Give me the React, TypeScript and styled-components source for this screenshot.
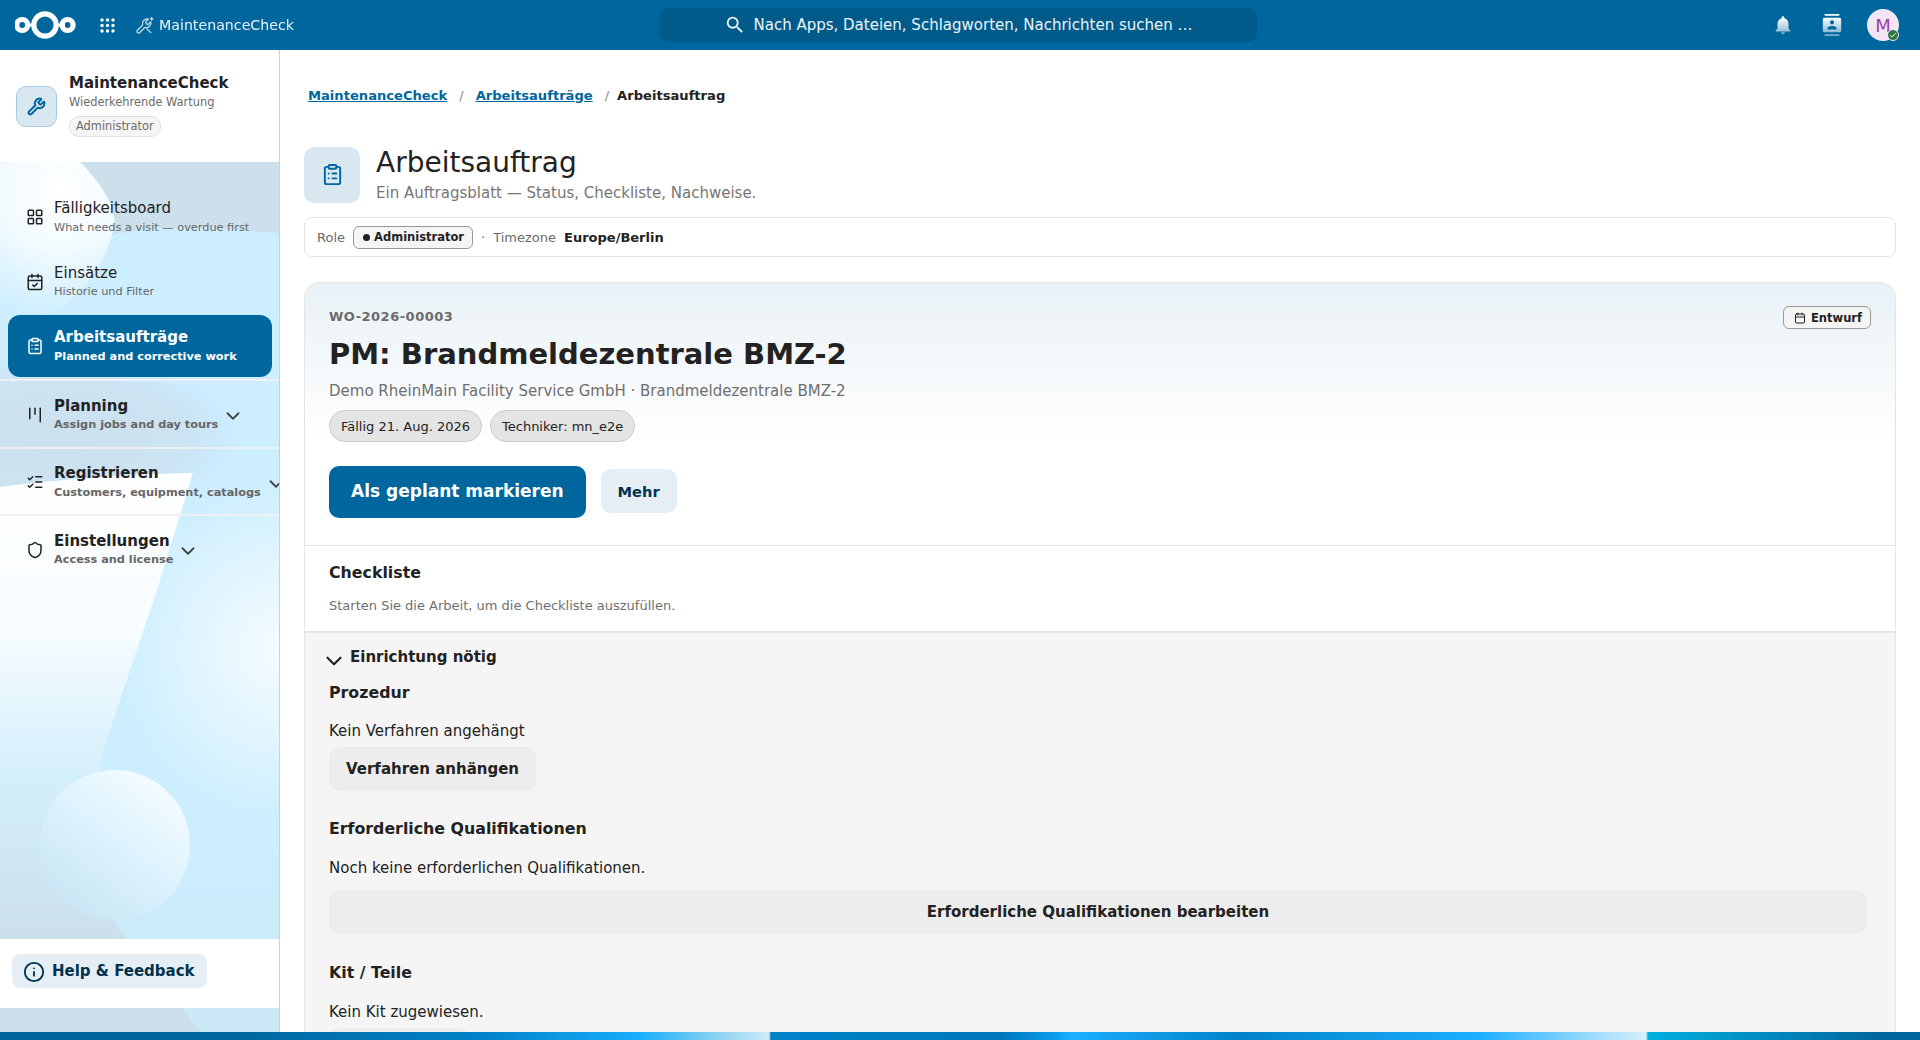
import React from "react"
import styled, { createGlobalStyle } from "styled-components"
import {
    Calendar,
    CalendarCheck,
    ChevronDown,
    ClipboardList,
    Info,
    Kanban,
    LayoutGrid,
    ListChecks,
    Shield,
    Wrench,
} from "lucide-react"
import { MdContacts, MdNotifications, MdSearch } from "react-icons/md"

const GlobalStyle = createGlobalStyle`
    html, body, #root {
        margin: 0;
        height: 100%;
    }

    body {
        font-family: "DejaVu Sans", "Liberation Sans", sans-serif;
        color: #222;
        overflow: hidden;
    }
`

const Page = styled.div`
    position: relative;
    display: grid;
    grid-template-rows: 50px 1fr 8px;
    height: 100vh;
    overflow: hidden;
`

const Wallpaper = styled.svg`
    position: absolute;
    left: 0;
    top: 0;
    width: 280px;
    height: 1040px;
`

const Header = styled.header`
    position: relative;
    display: grid;
    grid-template-columns: 660px 597px 1fr;
    align-items: center;
    background: #00679e;
    color: #fff;
`

const HeaderLeft = styled.div`
    display: flex;
    align-items: center;
    padding-left: 15px;
`

const AppGrid = styled.svg`
    width: 15px;
    height: 15px;
    margin-left: 23px;
    fill: #fff;
`

const AppIcon = styled.svg`
    width: 19px;
    height: 19px;
    margin-left: 20px;
    fill: none;
    stroke: #fff;
    stroke-width: 1.7;
    stroke-linecap: round;
    stroke-linejoin: round;
    opacity: 0.75;
`

const AppName = styled.span`
    margin-left: 5px;
    font-size: 14.2px;
    opacity: 0.92;
`

const SearchBox = styled.div`
    display: flex;
    align-items: center;
    justify-content: center;
    gap: 7px;
    height: 34px;
    border-radius: 8px;
    background: #005a8a;
    font-size: 15px;
    color: #edf5f9;

    svg {
        font-size: 22px;
    }
`

const HeaderRight = styled.div`
    display: flex;
    align-items: center;
    justify-content: flex-end;
    padding-right: 21px;
`

const FadedIcon = styled.span`
    display: flex;
    margin-right: 27px;
    font-size: 22px;
    color: #fff;
    mask-image: linear-gradient(#fff 15%, rgba(255, 255, 255, 0.45) 100%);

    &:nth-child(2) {
        margin-right: 24px;
    }
`

const Avatar = styled.div`
    position: relative;
    display: flex;
    align-items: center;
    justify-content: center;
    width: 32px;
    height: 32px;
    border-radius: 50%;
    background: #f3e6f4;
    color: #9c3faa;
    font-size: 18px;
`

const StatusDot = styled.span`
    position: absolute;
    right: 0;
    bottom: 0;
    display: flex;
    align-items: center;
    justify-content: center;
    box-sizing: border-box;
    width: 12px;
    height: 12px;
    border-radius: 50%;
    background: #2d7b41;
    border: 1px solid #f3e6f4;

    svg {
        width: 8px;
        height: 8px;
        fill: none;
        stroke: #fff;
        stroke-width: 3;
    }
`

const Body = styled.div`
    position: relative;
    display: flex;
    min-height: 0;
`

const Sidebar = styled.aside`
    display: flex;
    flex-direction: column;
    box-sizing: border-box;
    flex: 0 0 280px;
    border-right: 1px solid #b9d5e6;
    background: rgba(255, 255, 255, 0.8);
    overflow: hidden;
`

const Brand = styled.div`
    display: flex;
    align-items: center;
    gap: 12px;
    box-sizing: border-box;
    height: 112px;
    padding: 0 16px;
    background: #fff;
`

const BrandIcon = styled.div`
    display: flex;
    align-items: center;
    justify-content: center;
    box-sizing: border-box;
    width: 41px;
    height: 41px;
    border-radius: 10px;
    background: #d9e8f0;
    border: 1px solid #a6cbe0;
    color: #00679e;

    svg {
        width: 19px;
        height: 19px;
        stroke-width: 2.5;
    }
`

const BrandText = styled.div`
    display: flex;
    flex-direction: column;
    align-items: flex-start;
    margin-top: -2px;
`

const BrandTitle = styled.div`
    font-size: 15px;
    font-weight: 700;
    line-height: 21px;
`

const BrandSub = styled.div`
    font-size: 11.4px;
    line-height: 16px;
    color: #6b6b6b;
`

const RoleTag = styled.div`
    margin-top: 6px;
    padding: 0 6px;
    height: 19px;
    line-height: 19px;
    border-radius: 10px;
    border: 1px solid #e0e0e0;
    background: #f5f5f5;
    font-size: 11.4px;
    color: #6b6b6b;
`

const Nav = styled.nav`
    flex: 1;
    padding-top: 24px;
`

const NavRow = styled.div<{ $active?: boolean; $group?: boolean }>`
    display: flex;
    align-items: center;
    box-sizing: border-box;
    height: ${props => (props.$group ? "66px" : "62px")};
    margin: ${props => (props.$group ? "0" : "0 7px 2.5px 8px")};
    padding-left: ${props => (props.$group ? "26px" : "18px")};
    padding-top: ${props => (props.$group ? "1px" : "0")};
    border-radius: 12px;
    background: ${props => (props.$active ? "#00679e" : "transparent")};
    color: ${props => (props.$active ? "#fff" : "#222")};

    & > svg:first-child {
        flex: none;
        width: 18px;
        height: 18px;
    }
`

const NavDivider = styled.div`
    height: 2px;
    margin-top: -0.5px;
    background: #edf1f4;
`

const NavText = styled.div`
    margin-left: 10px;
    white-space: nowrap;
`

const NavTitle = styled.div<{ $strong?: boolean }>`
    font-size: 15px;
    line-height: 20px;
    font-weight: ${props => (props.$strong ? 700 : 400)};
`

const NavSub = styled.div<{ $strong?: boolean; $light?: boolean }>`
    margin-top: 1.5px;
    font-size: 11.3px;
    line-height: 16px;
    font-weight: ${props => (props.$strong ? 700 : 400)};
    color: ${props => (props.$light ? "#fff" : "#666")};
`

const NavChevron = styled(ChevronDown)`
    flex: none;
    width: 22px;
    height: 22px;
    margin: 3px 0 0 4px;
    color: #444;
`

const SidebarFooter = styled.div`
    display: flex;
    align-items: center;
    box-sizing: border-box;
    height: 69px;
    margin-bottom: 24px;
    padding: 0 0 5px 12px;
    background: #fff;
`

const HelpButton = styled.div`
    display: flex;
    align-items: center;
    gap: 7px;
    box-sizing: border-box;
    width: 195px;
    height: 34px;
    padding-left: 11px;
    border-radius: 8px;
    background: #e6eef5;
    color: #00324d;
    font-size: 15px;
    font-weight: 700;

    svg {
        width: 22px;
        height: 22px;
        margin-top: 2px;
    }
`

const Main = styled.main`
    flex: 1;
    min-width: 0;
    box-sizing: border-box;
    padding: 0 24px;
    background: #fff;
    overflow: hidden;
`

const Breadcrumbs = styled.div`
    display: flex;
    align-items: center;
    height: 20px;
    margin-top: 35px;
    padding-left: 4px;
    font-size: 13.1px;
    font-weight: 700;
`

const CrumbLink = styled.a`
    color: #00679e;
    text-decoration: underline;
`

const CrumbSep = styled.span<{ $tight?: boolean }>`
    margin: 0 ${props => (props.$tight ? "8px" : "12px")} 0 12px;
    font-weight: 400;
    color: #888;
`

const PageHead = styled.div`
    display: flex;
    align-items: center;
    gap: 16px;
    margin-top: 40px;
`

const HeadIcon = styled.div`
    display: flex;
    align-items: center;
    justify-content: center;
    width: 56px;
    height: 56px;
    border-radius: 10px;
    background: #d9e8f0;
    color: #00679e;

    svg {
        width: 23px;
        height: 23px;
    }
`

const HeadTitle = styled.h1`
    margin: 0;
    font-size: 28px;
    font-weight: 400;
    line-height: 35px;
`

const HeadSub = styled.div`
    margin-top: 2px;
    font-size: 15px;
    line-height: 22px;
    color: #767676;
`

const ContextBar = styled.div`
    display: flex;
    align-items: center;
    box-sizing: border-box;
    height: 40px;
    margin-top: 13px;
    padding-left: 12px;
    border: 1px solid #e4e4e4;
    border-radius: 8px;
    font-size: 13px;
    color: #6b6b6b;
`

const OutlineBadge = styled.span`
    display: inline-flex;
    align-items: center;
    gap: 4px;
    box-sizing: border-box;
    height: 23px;
    padding: 0 9px;
    border: 1px solid #999;
    border-radius: 6px;
    background: #f5f5f5;
    color: #222;
    font-size: 11.5px;
    font-weight: 700;
`

const BadgeDot = styled.i`
    width: 7px;
    height: 7px;
    border-radius: 50%;
    background: #222;
`

const ContextRole = styled(OutlineBadge)`
    margin-left: 8px;
    padding: 0 8px 0 9px;
`

const ContextDot = styled.span`
    margin: 0 8px 0 8px;
`

const ContextValue = styled.strong`
    margin-left: 8px;
    color: #222;
`

const Card = styled.section`
    margin-top: 25px;
    border: 1px solid #e4e4e4;
    border-bottom: none;
    border-radius: 16px 16px 0 0;
    overflow: hidden;
`

const Hero = styled.div`
    position: relative;
    box-sizing: border-box;
    height: 263px;
    padding: 25px 24px 0;
    border-bottom: 1px solid #e4e4e4;
    background: linear-gradient(#e9f1f6 0, #fff 160px);
`

const HeroCode = styled.div`
    font-size: 13px;
    font-weight: 700;
    line-height: 18px;
    letter-spacing: 0.5px;
    color: #6b6b6b;
`

const HeroTitle = styled.h2`
    margin: 6px 0 0;
    font-size: 29px;
    font-weight: 700;
    line-height: 44px;
`

const HeroSub = styled.div`
    margin-top: 4px;
    font-size: 15px;
    line-height: 22px;
    color: #6f6f6f;
`

const ChipRow = styled.div`
    display: flex;
    gap: 8px;
    margin-top: 8px;
`

const Chip = styled.span`
    display: flex;
    align-items: center;
    box-sizing: border-box;
    height: 32px;
    padding: 0 11px;
    border: 1px solid #ccc;
    border-radius: 16px;
    background: #e4e4e4;
    font-size: 13px;
`

const Actions = styled.div`
    display: flex;
    align-items: center;
    gap: 15px;
    margin-top: 24px;
`

const PrimaryButton = styled.button`
    height: 52px;
    padding: 0 22px 2px;
    border: none;
    border-radius: 10px;
    background: #00679e;
    color: #fff;
    font: 700 17px "DejaVu Sans", sans-serif;
`

const SoftButton = styled.button`
    height: 44px;
    margin-bottom: 2px;
    padding: 0 17px;
    border: none;
    border-radius: 10px;
    background: #e6eef5;
    color: #00324d;
    font: 700 14.6px "DejaVu Sans", sans-serif;
`

const EntwurfBadge = styled(OutlineBadge)`
    position: absolute;
    top: 23px;
    right: 24px;
    gap: 5px;
    padding: 0 8px 0 10px;

    svg {
        width: 12px;
        height: 12px;
    }
`

const CheckSection = styled.div`
    box-sizing: border-box;
    height: 87px;
    padding: 17px 24px 0;
    border-bottom: 2px solid #e4e4e4;
`

const SectionTitle = styled.div`
    font-size: 15.8px;
    font-weight: 700;
    line-height: 20px;
`

const Hint = styled.div`
    margin-top: 14px;
    font-size: 13px;
    line-height: 18px;
    color: #6f6f6f;
`

const Setup = styled.div`
    padding: 14px 28px 0 24px;
    background: #f5f5f5;
    height: 500px;
`

const SetupHead = styled.div`
    display: flex;
    align-items: flex-start;
    font-size: 15px;
    font-weight: 700;
    line-height: 20px;

    svg {
        flex: none;
        width: 26px;
        height: 26px;
        margin: 1px 3px -7px -8px;
    }
`

const Block = styled.div<{ $gap: number }>`
    margin-top: ${props => props.$gap}px;
`

const BlockText = styled.div<{ $gap?: number }>`
    margin-top: ${props => props.$gap ?? 18}px;
    font-size: 15px;
    line-height: 20px;
`

const GreyButton = styled.div<{ $wide?: boolean }>`
    display: flex;
    align-items: center;
    justify-content: center;
    box-sizing: border-box;
    width: ${props => (props.$wide ? "auto" : "fit-content")};
    height: 44px;
    margin-top: ${props => (props.$wide ? "12px" : "6px")};
    padding: 0 17px;
    border-radius: 10px;
    background: #ededed;
    font-size: 15px;
    font-weight: 700;
`

const KitButton = styled(GreyButton)`
    width: 140px;
    padding: 0;
`

const Strip = styled.div`
    position: relative;
    background: linear-gradient(
        90deg,
        #00639a 0,
        #00679e 240px,
        #0082c9 480px,
        #18aefc 640px,
        #8ed4f2 720px,
        #cfeaf6 769px,
        #0082c9 771px,
        #0078bb 1000px,
        #0a9be8 1053px,
        #1cafff 1070px,
        #0082c9 1240px,
        #1cafff 1480px,
        #d8f0fa 1646px,
        #00b0e0 1648px,
        #00679e 1880px
    );
`

const DUE = "Fällig 21. Aug. 2026"

export default function App() {
    return (
        <>
            <GlobalStyle />
            <Page>
                <Wallpaper viewBox="0 0 280 1040">
                    <defs>
                        <linearGradient id="wpBright" gradientUnits="userSpaceOnUse" x1="0" y1="230" x2="0" y2="1032">
                            <stop offset="0" stopColor="#05aaff" />
                            <stop offset="0.75" stopColor="#05aaff" />
                            <stop offset="1" stopColor="#0090d5" />
                        </linearGradient>
                        <radialGradient id="wpGlowTop" gradientUnits="userSpaceOnUse" cx="60" cy="190" r="130">
                            <stop offset="0" stopColor="#fff" />
                            <stop offset="0.45" stopColor="#fff" stopOpacity="0.75" />
                            <stop offset="1" stopColor="#fff" stopOpacity="0" />
                        </radialGradient>
                        <radialGradient id="wpBand" gradientUnits="userSpaceOnUse" cx="60" cy="435" r="1" gradientTransform="translate(60 435) scale(180 80) translate(-60 -435)">
                            <stop offset="0" stopColor="#0068b0" />
                            <stop offset="0.7" stopColor="#0068b0" stopOpacity="0.8" />
                            <stop offset="1" stopColor="#0068b0" stopOpacity="0" />
                        </radialGradient>
                        <linearGradient id="wpLeft" gradientUnits="userSpaceOnUse" x1="0" y1="490" x2="0" y2="930">
                            <stop offset="0" stopColor="#f4fbff" />
                            <stop offset="0.3" stopColor="#e0f3ff" />
                            <stop offset="0.65" stopColor="#2ab0ee" />
                            <stop offset="1" stopColor="#00679e" />
                        </linearGradient>
                        <radialGradient id="wpGlowRight" gradientUnits="userSpaceOnUse" cx="285" cy="650" r="170">
                            <stop offset="0" stopColor="#fff" stopOpacity="0.8" />
                            <stop offset="0.6" stopColor="#fff" stopOpacity="0.35" />
                            <stop offset="1" stopColor="#fff" stopOpacity="0" />
                        </radialGradient>
                        <linearGradient id="wpBall" x1="0.8" y1="0.1" x2="0.2" y2="0.9">
                            <stop offset="0" stopColor="#c4e8ff" />
                            <stop offset="0.5" stopColor="#4fc0f5" />
                            <stop offset="1" stopColor="#0082cd" />
                        </linearGradient>
                    </defs>
                    <rect width="280" height="1040" fill="#00679e" />
                    <path d="M0 160 H78 C108 190 120 215 112 235 C170 222 230 230 280 233 V1032 H0 Z" fill="url(#wpBright)" />
                    <path d="M0 160 H78 C108 190 120 215 112 235 C100 280 60 320 0 340 Z" fill="url(#wpGlowTop)" />
                    <rect x="0" y="350" width="240" height="140" fill="url(#wpBand)" />
                    <rect x="110" y="480" width="170" height="340" fill="url(#wpGlowRight)" />
                    <path d="M0 487 C70 478 130 474 193 473 L157 590 L100 760 L116 925 L184 1010 L200 1032 H0 Z" fill="url(#wpLeft)" />
                    <path d="M0 925 H116 L184 1010 L200 1032 H0 Z" fill="#00679e" />
                    <circle cx="115" cy="845" r="75" fill="url(#wpBall)" />
                </Wallpaper>
                <Header>
                    <HeaderLeft>
                        <svg width="62" height="30" viewBox="0 0 62 30" fill="none" stroke="#fff">
                            <path d="M12 15h6M42 15h8" strokeWidth="3" />
                            <circle cx="7.2" cy="15" r="5.5" strokeWidth="5.2" />
                            <circle cx="30" cy="15" r="11.2" strokeWidth="5.2" />
                            <circle cx="52.6" cy="15" r="5.5" strokeWidth="5.2" />
                        </svg>
                        <AppGrid viewBox="0 0 15 15">
                            {[2, 7.5, 13].flatMap(y =>
                                [2, 7.5, 13].map(x => (
                                    <circle key={`${x}-${y}`} cx={x} cy={y} r="1.7" />
                                )),
                            )}
                        </AppGrid>
                        <AppIcon viewBox="0 0 24 24">
                            <path d="M13.7 7.3a1 1 0 0 0 0 1.4l1.6 1.6a1 1 0 0 0 1.4 0l3.2-3.2a6 6 0 0 1-7.4 7.4l-6.4 6.4a2.12 2.12 0 0 1-3-3l6.4-6.4a6 6 0 0 1 7.4-7.4z" />
                            <path d="M21 2v3M19.5 3.5h3M15 16l5 5" />
                        </AppIcon>
                        <AppName>MaintenanceCheck</AppName>
                    </HeaderLeft>
                    <SearchBox>
                        <MdSearch />
                        Nach Apps, Dateien, Schlagworten, Nachrichten suchen …
                    </SearchBox>
                    <HeaderRight>
                        <FadedIcon>
                            <MdNotifications />
                        </FadedIcon>
                        <FadedIcon>
                            <MdContacts />
                        </FadedIcon>
                        <Avatar>
                            M
                            <StatusDot>
                                <svg viewBox="0 0 24 24">
                                    <path d="M4 13l5 5L20 7" />
                                </svg>
                            </StatusDot>
                        </Avatar>
                    </HeaderRight>
                </Header>
                <Body>
                    <Sidebar>
                        <Brand>
                            <BrandIcon>
                                <Wrench />
                            </BrandIcon>
                            <BrandText>
                                <BrandTitle>MaintenanceCheck</BrandTitle>
                                <BrandSub>Wiederkehrende Wartung</BrandSub>
                                <RoleTag>Administrator</RoleTag>
                            </BrandText>
                        </Brand>
                        <Nav>
                            <NavRow>
                                <LayoutGrid />
                                <NavText>
                                    <NavTitle>Fälligkeitsboard</NavTitle>
                                    <NavSub>What needs a visit — overdue first</NavSub>
                                </NavText>
                            </NavRow>
                            <NavRow>
                                <CalendarCheck />
                                <NavText>
                                    <NavTitle>Einsätze</NavTitle>
                                    <NavSub>Historie und Filter</NavSub>
                                </NavText>
                            </NavRow>
                            <NavRow $active>
                                <ClipboardList />
                                <NavText>
                                    <NavTitle $strong>Arbeitsaufträge</NavTitle>
                                    <NavSub $strong $light>Planned and corrective work</NavSub>
                                </NavText>
                            </NavRow>
                            <NavDivider />
                            <NavRow $group>
                                <Kanban />
                                <NavText>
                                    <NavTitle $strong>Planning</NavTitle>
                                    <NavSub $strong>Assign jobs and day tours</NavSub>
                                </NavText>
                                <NavChevron />
                            </NavRow>
                            <NavDivider />
                            <NavRow $group>
                                <ListChecks />
                                <NavText>
                                    <NavTitle $strong>Registrieren</NavTitle>
                                    <NavSub $strong>Customers, equipment, catalogs</NavSub>
                                </NavText>
                                <NavChevron />
                            </NavRow>
                            <NavDivider />
                            <NavRow $group>
                                <Shield />
                                <NavText>
                                    <NavTitle $strong>Einstellungen</NavTitle>
                                    <NavSub $strong>Access and license</NavSub>
                                </NavText>
                                <NavChevron />
                            </NavRow>
                        </Nav>
                        <SidebarFooter>
                            <HelpButton>
                                <Info />
                                Help &amp; Feedback
                            </HelpButton>
                        </SidebarFooter>
                    </Sidebar>
                    <Main>
                        <Breadcrumbs>
                            <CrumbLink>MaintenanceCheck</CrumbLink>
                            <CrumbSep>/</CrumbSep>
                            <CrumbLink>Arbeitsaufträge</CrumbLink>
                            <CrumbSep $tight>/</CrumbSep>
                            <span>Arbeitsauftrag</span>
                        </Breadcrumbs>
                        <PageHead>
                            <HeadIcon>
                                <ClipboardList />
                            </HeadIcon>
                            <div>
                                <HeadTitle>Arbeitsauftrag</HeadTitle>
                                <HeadSub>Ein Auftragsblatt — Status, Checkliste, Nachweise.</HeadSub>
                            </div>
                        </PageHead>
                        <ContextBar>
                            Role
                            <ContextRole>
                                <BadgeDot />
                                Administrator
                            </ContextRole>
                            <ContextDot>·</ContextDot>
                            Timezone
                            <ContextValue>Europe/Berlin</ContextValue>
                        </ContextBar>
                        <Card>
                            <Hero>
                                <HeroCode>WO-2026-00003</HeroCode>
                                <HeroTitle>PM: Brandmeldezentrale BMZ-2</HeroTitle>
                                <HeroSub>Demo RheinMain Facility Service GmbH · Brandmeldezentrale BMZ-2</HeroSub>
                                <ChipRow>
                                    <Chip>{DUE}</Chip>
                                    <Chip>Techniker: mn_e2e</Chip>
                                </ChipRow>
                                <Actions>
                                    <PrimaryButton>Als geplant markieren</PrimaryButton>
                                    <SoftButton>Mehr</SoftButton>
                                </Actions>
                                <EntwurfBadge>
                                    <Calendar />
                                    Entwurf
                                </EntwurfBadge>
                            </Hero>
                            <CheckSection>
                                <SectionTitle>Checkliste</SectionTitle>
                                <Hint>Starten Sie die Arbeit, um die Checkliste auszufüllen.</Hint>
                            </CheckSection>
                            <Setup>
                                <SetupHead>
                                    <ChevronDown />
                                    Einrichtung nötig
                                </SetupHead>
                                <Block $gap={16}>
                                    <SectionTitle>Prozedur</SectionTitle>
                                    <BlockText>Kein Verfahren angehängt</BlockText>
                                    <GreyButton>Verfahren anhängen</GreyButton>
                                </Block>
                                <Block $gap={28}>
                                    <SectionTitle>Erforderliche Qualifikationen</SectionTitle>
                                    <BlockText $gap={19}>Noch keine erforderlichen Qualifikationen.</BlockText>
                                    <GreyButton $wide>Erforderliche Qualifikationen bearbeiten</GreyButton>
                                </Block>
                                <Block $gap={29}>
                                    <SectionTitle>Kit / Teile</SectionTitle>
                                    <BlockText $gap={19}>Kein Kit zugewiesen.</BlockText>
                                    <KitButton />
                                </Block>
                            </Setup>
                        </Card>
                    </Main>
                </Body>
                <Strip />
            </Page>
        </>
    )
}
